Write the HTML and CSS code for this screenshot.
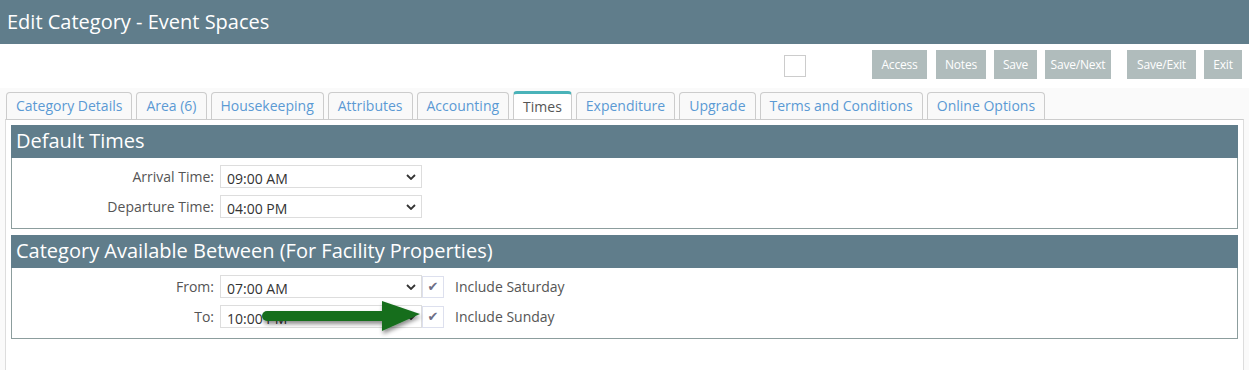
FILE: index.html
```html
<!DOCTYPE html>
<html lang="en">
<head>
    <meta charset="UTF-8">
    <meta name="viewport" content="width=device-width, initial-scale=1.0">
    <title>Edit Category - Event Spaces</title>
    <link rel="stylesheet" href="styles.css">
</head>
<body>
    <div class="page-header">
        <h1>Edit Category - Event Spaces</h1>
    </div>

    <div class="toolbar">
        <span class="toolbar-check"></span>
        <button class="btn">Access</button>
        <button class="btn">Notes</button>
        <button class="btn">Save</button>
        <button class="btn">Save/Next</button>
        <button class="btn btn-wide-gap">Save/Exit</button>
        <button class="btn">Exit</button>
    </div>

    <div class="tab-area">
        <ul class="tabs">
            <li class="tab">Category Details</li>
            <li class="tab">Area (6)</li>
            <li class="tab">Housekeeping</li>
            <li class="tab">Attributes</li>
            <li class="tab">Accounting</li>
            <li class="tab active">Times</li>
            <li class="tab">Expenditure</li>
            <li class="tab">Upgrade</li>
            <li class="tab">Terms and Conditions</li>
            <li class="tab">Online Options</li>
        </ul>

        <div class="tab-panel">
            <div class="section">
                <h2 class="section-title">Default Times</h2>
                <div class="section-body">
                    <div class="form-row">
                        <label>Arrival Time:</label>
                        <select><option>09:00 AM</option></select>
                    </div>
                    <div class="form-row">
                        <label>Departure Time:</label>
                        <select><option>04:00 PM</option></select>
                    </div>
                </div>
            </div>

            <div class="section">
                <h2 class="section-title">Category Available Between (For Facility Properties)</h2>
                <div class="section-body">
                    <div class="form-row">
                        <label>From:</label>
                        <select><option>07:00 AM</option></select>
                        <span class="check-box">&#10004;</span>
                        <span class="check-label">Include Saturday</span>
                    </div>
                    <div class="form-row">
                        <label>To:</label>
                        <select><option>10:00 PM</option></select>
                        <span class="check-box">&#10004;</span>
                        <span class="check-label">Include Sunday</span>
                    </div>
                </div>
            </div>
        </div>
    </div>

    <!-- annotation arrow over the "To" row -->
    <svg class="arrow" width="180" height="44" viewBox="0 0 180 44">
        <defs>
            <filter id="shadow" x="-10%" y="-30%" width="130%" height="180%">
                <feDropShadow dx="1" dy="3" stdDeviation="2" flood-color="#000" flood-opacity="0.45"/>
            </filter>
        </defs>
        <g filter="url(#shadow)">
            <rect x="10" y="13" width="125" height="10" rx="5" fill="#176e1f"/>
            <polygon points="130,3 168,16 130,33" fill="#176e1f"/>
        </g>
    </svg>
</body>
</html>
```

FILE: styles.css
```css
* {
    margin: 0;
    padding: 0;
    box-sizing: border-box;
    font-family: 'Open Sans', 'Noto Sans', sans-serif;
}

body {
    position: relative;
    width: 1249px;
    height: 370px;
    overflow: hidden;
    background-color: #fff;
}

.page-header {
    height: 44px;
    background-color: #607d8b;
    padding-left: 7px;
    display: flex;
    align-items: center;
}

.page-header h1 {
    color: #fff;
    font-size: 20px;
    font-weight: 400;
    margin-top: -2px;
}

.toolbar {
    height: 44px;
    display: flex;
    justify-content: flex-end;
    align-items: flex-start;
    padding: 6px 7px 0 0;
}

.toolbar-check {
    width: 22px;
    height: 22px;
    border: 1px solid #ccc;
    background: #fff;
    margin: 5px 66px 0 0;
}

.btn {
    height: 29px;
    padding: 0;
    border: none;
    background-color: #b0bcbc;
    color: #fff;
    font-size: 12px;
    letter-spacing: -0.2px;
    margin-left: 8px;
}

.toolbar .btn:nth-of-type(1) {
    margin-left: 0;
    width: 55px;
}

.toolbar .btn:nth-of-type(2) {
    margin-left: 9px;
    width: 50px;
}

.toolbar .btn:nth-of-type(3) {
    width: 43px;
}

.toolbar .btn:nth-of-type(4) {
    width: 66px;
}

.btn-wide-gap {
    margin-left: 16px;
    width: 69px;
}

.toolbar .btn:nth-of-type(6) {
    width: 38px;
}

.tab-area {
    background-color: #fafafa;
    height: 282px;
    padding: 4px 5px 0 5px;
}

.tabs {
    list-style: none;
    display: flex;
    gap: 4px;
    padding-left: 1px;
    position: relative;
    z-index: 1;
}

.tab {
    height: 27px;
    padding: 0 9px;
    border: 1px solid #ccc;
    border-bottom: none;
    border-radius: 4px 4px 0 0;
    background-color: #f9f9f9;
    color: #5b9ad4;
    font-size: 14px;
    line-height: 26px;
}

.tab.active {
    background-color: #fff;
    color: #555;
    border-top: 3px solid #4ab3b9;
    line-height: 26px;
    height: 28px;
    margin-top: -1px;
    margin-bottom: -1px;
}

.tab-panel {
    background-color: #fff;
    border: 1px solid #ddd;
    border-top-color: #ccc;
    border-bottom: none;
    height: 260px;
    padding: 5px 5px 0 5px;
}

.section {
    margin-bottom: 6px;
}

.section-title {
    height: 33px;
    background-color: #607d8b;
    color: #fff;
    font-size: 20px;
    font-weight: 400;
    line-height: 32px;
    padding-left: 5px;
}

.section-body {
    border: 1px solid #8c9d9d;
    border-top: none;
    padding: 7px 0 10px 0;
    display: flex;
    flex-direction: column;
    gap: 7px;
}

.form-row {
    display: flex;
    align-items: center;
    height: 23px;
}

.form-row label {
    width: 208px;
    text-align: right;
    padding-right: 6px;
    color: #555;
    font-size: 14px;
}

select {
    appearance: none;
    -webkit-appearance: none;
    width: 202px;
    height: 23px;
    border: 1px solid #ddd;
    background: #fff url("data:image/svg+xml,%3Csvg xmlns='http://www.w3.org/2000/svg' width='10' height='6'%3E%3Cpath d='M1 1l4 4 4-4' fill='none' stroke='%23333' stroke-width='1.8'/%3E%3C/svg%3E") no-repeat right 5px center;
    color: #333;
    font-size: 14px;
    padding: 3px 0 0 6px;
}

.check-box {
    width: 22px;
    height: 22px;
    border: 1px solid #dde0ee;
    display: flex;
    align-items: center;
    justify-content: center;
    color: #6e6e85;
    font-size: 13px;
    font-family: 'DejaVu Sans', sans-serif;
}

.check-label {
    margin-left: 11px;
    color: #555;
    font-size: 14px;
}

.arrow {
    position: absolute;
    left: 252px;
    top: 298px;
}
```
